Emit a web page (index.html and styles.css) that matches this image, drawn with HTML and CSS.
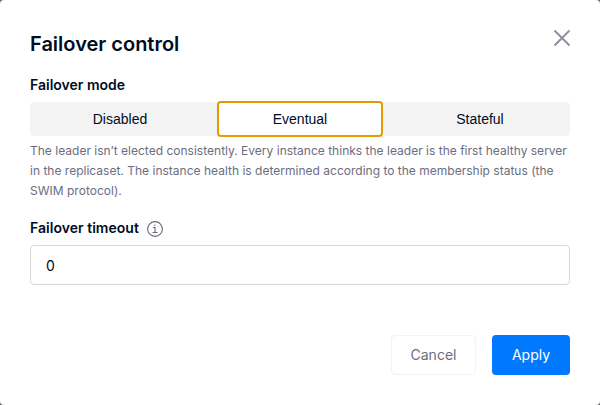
FILE: index.html
```html
<!DOCTYPE html>
<html lang="en">
<head>
<meta charset="utf-8">
<title>Failover control</title>
<link rel="stylesheet" href="styles.css">
</head>
<body>
<div class="modal">
  <header class="header">
    <h2 class="title">Failover control</h2>
    <button class="close" aria-label="Close"><svg width="18" height="18" viewBox="0 0 18 18"><path d="M1.5 1.5l15 15M16.5 1.5l-15 15"/></svg></button>
  </header>
  <div class="label">Failover mode</div>
  <div class="segments">
    <button class="segment">Disabled</button>
    <button class="segment active">Eventual</button>
    <button class="segment">Stateful</button>
  </div>
  <p class="hint">The leader isn’t elected consistently. Every instance thinks the leader is the first healthy server in the replicaset. The instance health is determined according to the membership status (the SWIM protocol).</p>
  <div class="label timeout">Failover timeout
    <svg class="info" width="16" height="16" viewBox="0 0 16 16"><circle cx="8" cy="8" r="7.4"/><path d="M6 6.5h2v5M5.5 11.5h5M7.1 4.2h1.4"/></svg>
  </div>
  <input class="input" value="0">
  <footer class="footer">
    <button class="btn">Cancel</button>
    <button class="btn primary">Apply</button>
  </footer>
</div>
</body>
</html>
```

FILE: styles.css
```css
* { box-sizing: border-box; }
body { margin: 0; background: #666; font-family: Inter, sans-serif; color: #000c23; }
button, input { font: inherit; color: inherit; margin: 0; }
.modal { width: 600px; height: 405px; padding: 28px 30px 30px; background: #fff; border-radius: 4px; display: flex; flex-direction: column; }
.header { display: flex; justify-content: space-between; height: 46px; }
.title { margin: 0; font-size: 20px; line-height: 32px; font-weight: 600; }
.close { width: 18px; height: 18px; padding: 0; margin: 1px -1px 0 0; border: 0; background: none; }
.close svg { display: block; fill: none; stroke: #8e919f; stroke-width: 2; }
.label { font-size: 14px; line-height: 22px; font-weight: 600; }
.segments { display: grid; grid-template-columns: repeat(3, 180px); height: 34px; margin-top: 6px; background: #f3f3f3; border-radius: 4px; }
.segment { padding: 0; border: 0; background: none; font: 14px "Liberation Sans", sans-serif; }
.segment.active { margin: -1px 7px; background: #fff; border: 2px solid #e39b00; border-radius: 4px; }
.hint { margin: 5px 0 0; font-size: 12px; line-height: 20px; letter-spacing: .01px; color: #6b6d80; }
.timeout { display: flex; align-items: center; gap: 8px; margin-top: 16px; letter-spacing: .03px; }
.info { position: relative; top: 1px; fill: none; stroke: #65687a; stroke-width: 1.1; }
.input { width: 100%; height: 40px; margin-top: 6px; padding: 0 15px; border: 1px solid #d9d9d9; border-radius: 4px; font-size: 14px; background: #fff; }
.footer { display: flex; justify-content: flex-end; gap: 16px; margin-top: auto; }
.btn { width: 85px; height: 40px; padding: 0 0 2px; border: 1px solid #f3f3f3; border-radius: 4px; background: #fff; color: #6b6d80; font-size: 14px; }
.btn.primary { width: 78px; border: 0; background: #0079ff; color: #fff; }
```
